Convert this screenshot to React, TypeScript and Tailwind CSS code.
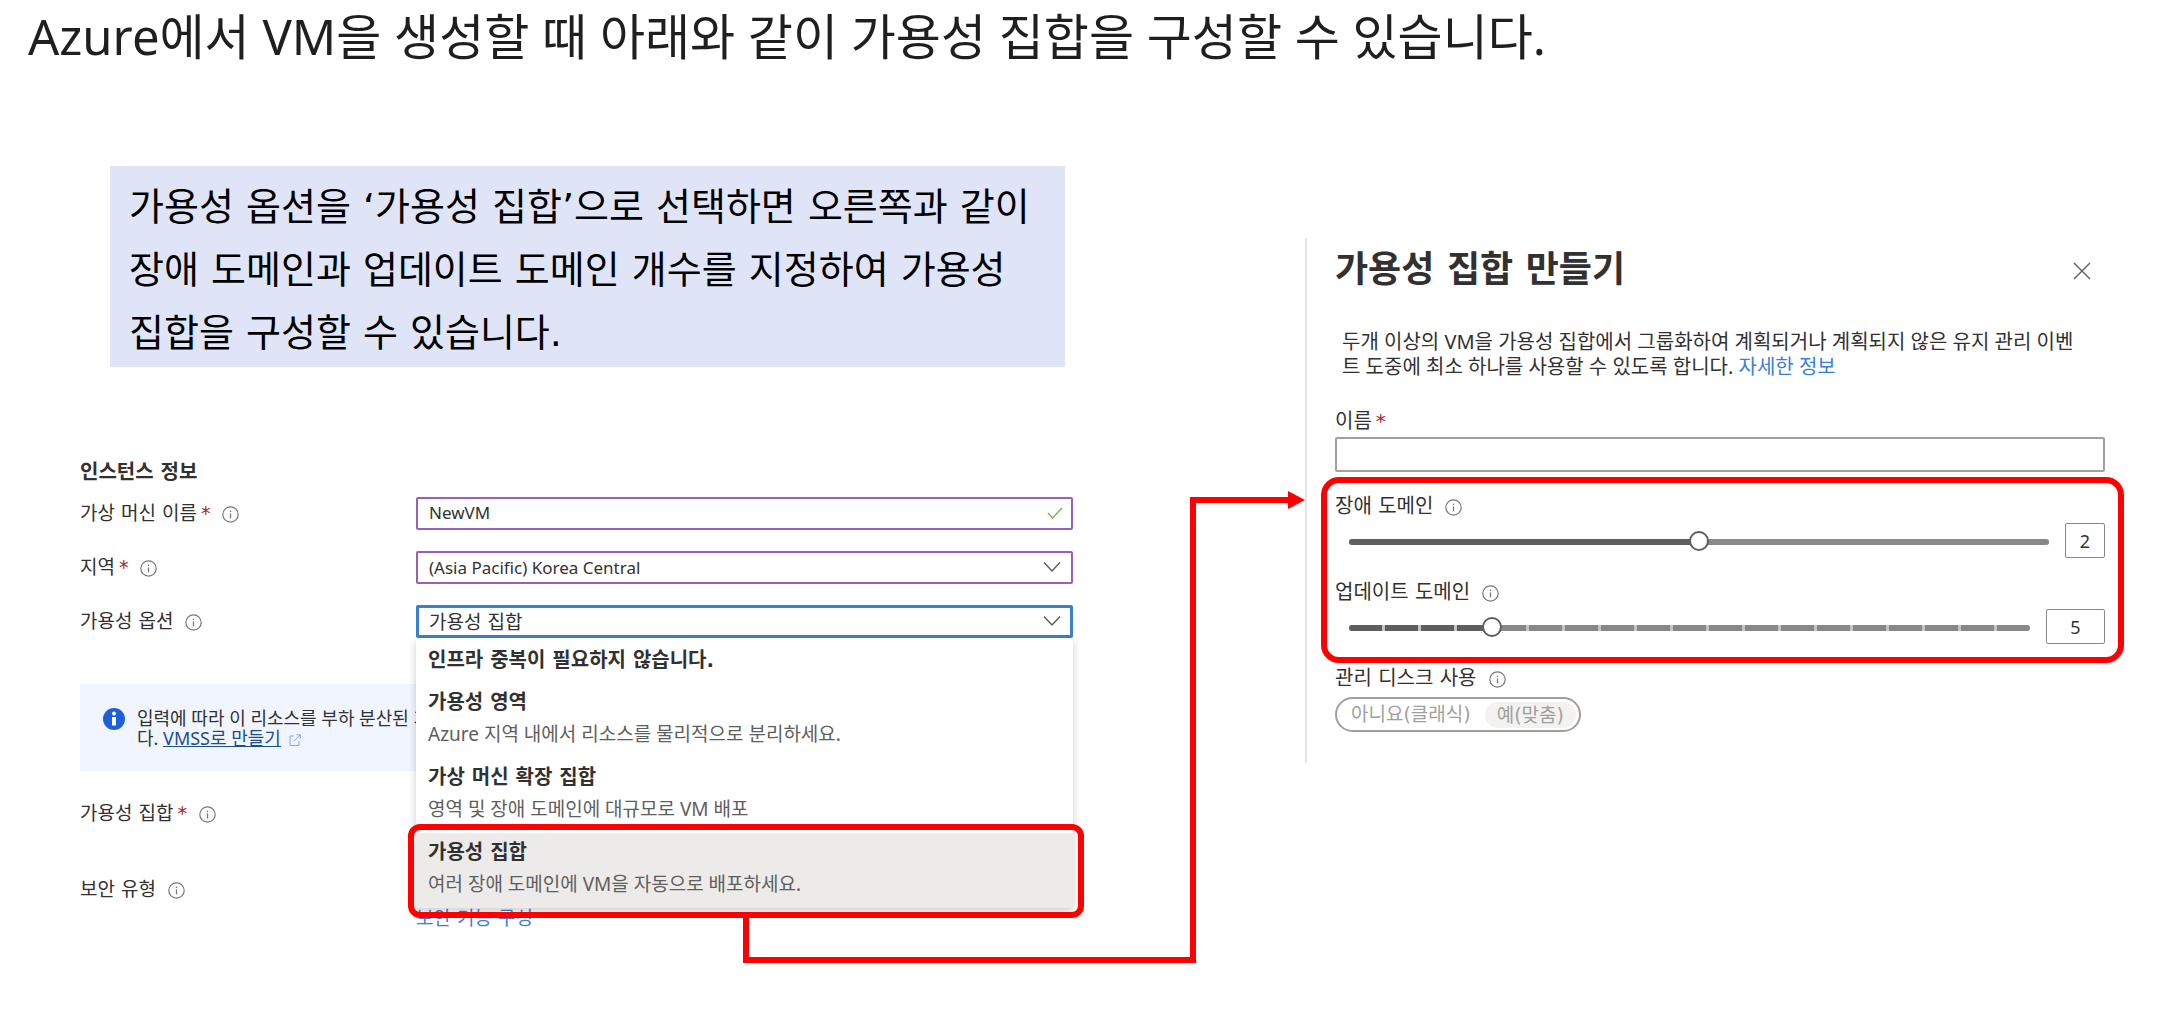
import { useState } from 'react'

interface Option {
  title: string
  description?: string
}

const OPTIONS: Option[] = [
  { title: '인프라 중복이 필요하지 않습니다.' },
  { title: '가용성 영역', description: 'Azure 지역 내에서 리소스를 물리적으로 분리하세요.' },
  { title: '가상 머신 확장 집합', description: '영역 및 장애 도메인에 대규모로 VM 배포' },
  { title: '가용성 집합', description: '여러 장애 도메인에 VM을 자동으로 배포하세요.' },
]

function InfoIcon() {
  return (
    <svg className="size-[17px] shrink-0 mt-0.5" viewBox="0 0 17 17" fill="none" stroke="#7a7876" aria-hidden="true">
      <circle cx="8.5" cy="8.5" r="7.7" strokeWidth="1.2" />
      <path d="M8.5 7.4v5" strokeWidth="1.3" />
      <path d="M8.5 4.6v1.4" strokeWidth="1.3" />
    </svg>
  )
}

function Chevron() {
  return (
    <svg className="absolute right-3 top-2.5 w-[18px] h-3 pointer-events-none" viewBox="0 0 18 12" fill="none" stroke="#605e5c" strokeWidth="1.5" aria-hidden="true">
      <path d="M1 1.5l8 8.5 8-8.5" />
    </svg>
  )
}

interface LabelProps {
  htmlFor?: string
  text: string
  required?: boolean
  info?: boolean
}

function FieldLabel({ htmlFor, text, required, info = true }: LabelProps) {
  return (
    <div className="flex items-center font-['DejaVu_Sans','Noto_Sans_CJK_KR',sans-serif]">
      <label htmlFor={htmlFor} className="whitespace-nowrap">
        {text}
        {required && <span className="text-[#a4262c] ml-1">*</span>}
      </label>
      {info && <span className="ml-3"><InfoIcon /></span>}
    </div>
  )
}

interface SliderProps {
  id: string
  label: string
  min: number
  max: number
  value: number
  onChange: (value: number) => void
  wide?: boolean
}

function DomainSlider({ id, label, min, max, value, onChange, wide }: SliderProps) {
  const steps = Array.from({ length: max - min }, (_, i) => i + min)

  return (
    <div>
      <div className="h-8 flex items-center">
        <FieldLabel htmlFor={id} text={label} />
      </div>
      <div className="flex items-center gap-4 pl-3.5 h-[35px] mt-px">
        <div className="grid flex-1 items-center">
          <div className="[grid-area:1/1] mt-[3px] flex gap-[3px] h-1.5 rounded-full overflow-hidden bg-[#c8c6c4]">
            {steps.map((step) => (
              <div key={step} className={`flex-1 ${step < value ? 'bg-[#605e5c]' : 'bg-[#8a8886]'}`} />
            ))}
          </div>
          <input
            id={id}
            type="range"
            min={min}
            max={max}
            value={value}
            onChange={(e) => onChange(Number(e.target.value))}
            className="[grid-area:1/1] -mx-2.5 w-[calc(100%+20px)] h-5 appearance-none bg-transparent [&::-webkit-slider-thumb]:appearance-none [&::-webkit-slider-thumb]:size-5 [&::-webkit-slider-thumb]:rounded-full [&::-webkit-slider-thumb]:border-2 [&::-webkit-slider-thumb]:border-[#605e5c] [&::-webkit-slider-thumb]:bg-white"
          />
        </div>
        <input
          aria-label={`${label} 값`}
          value={value}
          readOnly
          className={`h-[35px] border border-[#8a8886] rounded-xs text-center text-[18px] ${wide ? 'w-[59px]' : 'w-10'}`}
        />
      </div>
    </div>
  )
}

// Red line from the selected option over to the create panel
function Connector() {
  return (
    <div className="pointer-events-none" aria-hidden="true">
      <div className="absolute left-1/2 -right-28 top-full h-[45px] -ml-[3px] border-l-6 border-b-6 border-[#ff0000]" />
      <div className="absolute left-full ml-[106px] -bottom-[45px] w-[98px] h-[466px] border-l-6 border-t-6 border-[#ff0000]">
        <svg className="absolute -right-[17px] -top-3 w-[17px] h-[18px]" viewBox="0 0 17 18">
          <path d="M0 0l17 9-17 9z" fill="#ff0000" />
        </svg>
      </div>
    </div>
  )
}

function InstanceForm() {
  const [name, setName] = useState('NewVM')
  const [selected, setSelected] = useState('가용성 집합')

  return (
    <form className="mt-[91px] text-[19px] text-[#323130]">
      <h2 className="text-[20px] leading-7 font-bold font-['DejaVu_Sans','Noto_Sans_CJK_KR',sans-serif]">인스턴스 정보</h2>

      <div className="mt-[11px] grid grid-cols-[336px_1fr] auto-rows-[33px] gap-y-[21px]">
        <FieldLabel htmlFor="vm-name" text="가상 머신 이름" required />
        <div className="relative">
          <input
            id="vm-name"
            value={name}
            onChange={(e) => setName(e.target.value)}
            className="w-full h-full pl-[11px] pr-10 pb-0.5 text-[17px] border-2 border-[#9b5fb5] rounded-xs"
          />
          <svg className="absolute right-2.5 top-2.5 w-4 h-3" viewBox="0 0 16 12" fill="none" stroke="#7fb95a" strokeWidth="1.6" aria-hidden="true">
            <path d="M1 6l4.5 5L15 1" />
          </svg>
        </div>

        <FieldLabel htmlFor="region" text="지역" required />
        <div className="relative">
          <select id="region" className="appearance-none w-full h-full pl-[11px] pr-10 text-[17px] border-2 border-[#9b5fb5] rounded-xs">
            <option>(Asia Pacific) Korea Central</option>
          </select>
          <Chevron />
        </div>

        <FieldLabel htmlFor="availability" text="가용성 옵션" />
        <div className="relative">
          <select
            id="availability"
            value={selected}
            onChange={(e) => setSelected(e.target.value)}
            className="appearance-none w-full h-full pl-2.5 pr-10 border-3 border-[#3a7fd5] rounded-xs font-['DejaVu_Sans','Noto_Sans_CJK_KR',sans-serif]"
          >
            {OPTIONS.map((o) => <option key={o.title}>{o.title}</option>)}
          </select>
          <Chevron />

          <ul className="absolute z-10 inset-x-0 top-full bg-white shadow-[0_3px_8px_rgba(0,0,0,0.2)]" role="listbox" aria-label="가용성 옵션">
            {OPTIONS.map((o) => (
              <li
                key={o.title}
                role="option"
                aria-selected={o.title === selected}
                onClick={() => setSelected(o.title)}
                className={`relative px-3 ${o.description ? 'h-[75px] pt-[5px]' : 'h-[45px] pt-2'} ${o.title === selected ? 'bg-[#edebe9]' : ''}`}
              >
                <div className="text-[20px] leading-7 font-bold font-['DejaVu_Sans','Noto_Sans_CJK_KR',sans-serif]">{o.title}</div>
                {o.description && <div className="mt-1 leading-7 text-[#605e5c]">{o.description}</div>}
                {o.title === selected && (
                  <div className="absolute -left-2 -right-[11px] -top-[9px] -bottom-2.5">
                    <div className="h-full border-6 border-[#ff0000] rounded-xl" />
                    <Connector />
                  </div>
                )}
              </li>
            ))}
          </ul>
        </div>
      </div>

      <div className="mt-[46px] mr-3 h-[87px] pt-6 pl-[23px] flex gap-3 bg-[#f0f5ff] text-[18px] leading-5">
        <svg className="size-[22px] shrink-0" viewBox="0 0 22 22" aria-hidden="true">
          <circle cx="11" cy="11" r="11" fill="#1f5fd8" />
          <circle cx="11" cy="5.5" r="2" fill="#fff" />
          <path d="M9 9h4v8.500h-4z" fill="#fff" />
        </svg>
        <p className="whitespace-nowrap">
          입력에 따라 이 리소스를 부하 분산된 가상<br />
          다. <a href="#vmss" className="text-[#1b4f8c] underline">VMSS로 만들기</a>
          <svg className="inline ml-2 size-3" viewBox="0 0 12 12" fill="none" stroke="#7ea6ea" aria-hidden="true">
            <path d="M5 2H1v9.5h9V7M7.5.8H11.400V4.500M11.200 1L5 7" />
          </svg>
        </p>
      </div>

      <div className="mt-[26px] grid grid-cols-[336px_1fr] auto-rows-[33px] gap-y-[43px]">
        <div className="col-span-2 flex"><FieldLabel text="가용성 집합" required /></div>
        <div className="col-span-2 flex"><FieldLabel text="보안 유형" /></div>
      </div>
      <a href="#security" className="ml-[336px] block w-fit leading-6 text-[#3a7fd5] font-['DejaVu_Sans','Noto_Sans_CJK_KR',sans-serif]">보안 기능 구성</a>
    </form>
  )
}

function CreatePanel() {
  const [fault, setFault] = useState(2)
  const [update, setUpdate] = useState(5)

  return (
    <section className="mt-[72px] h-[525px] pl-7 border-l-2 border-[#e5e5e5] text-[20px] text-[#323130]">
      <div className="flex items-center justify-between pt-2 pr-3.5">
        <h2 className="text-[36px] leading-12 font-bold font-['DejaVu_Sans','Noto_Sans_CJK_KR',sans-serif]">가용성 집합 만들기</h2>
        <button type="button" aria-label="닫기">
          <svg className="size-[18px] mt-0.5" viewBox="0 0 18 18" fill="none" stroke="#605e5c" strokeWidth="1.4">
            <path d="M1 1l16 16M17 1L1 17" />
          </svg>
        </button>
      </div>

      <p className="mt-[35px] pl-[7px] leading-[25px] whitespace-nowrap">
        두개 이상의 VM을 가용성 집합에서 그룹화하여 계획되거나 계획되지 않은 유지 관리 이벤<br />
        트 도중에 최소 하나를 사용할 수 있도록 합니다. <a href="#more" className="text-[#3a7fd5]">자세한 정보</a>
      </p>

      <div className="mt-[26px] leading-8">
        <FieldLabel htmlFor="set-name" text="이름" required info={false} />
      </div>
      <input id="set-name" className="block w-full h-[35px] px-3 border-2 border-[#a3a1a0] rounded-xs" />

      <div className="mt-[5px] -ml-[14px] -mr-[19px] h-[186px] border-6 border-[#ff0000] rounded-[18px] pl-2 pr-[13px] pt-[7px] flex flex-col gap-[18px]">
        <DomainSlider id="fault-domain" label="장애 도메인" min={1} max={3} value={fault} onChange={setFault} />
        <DomainSlider id="update-domain" label="업데이트 도메인" min={1} max={20} value={update} onChange={setUpdate} wide />
      </div>

      <div className="h-8">
        <FieldLabel text="관리 디스크 사용" />
      </div>
      <div className="w-fit h-[35px] mt-0.5 pl-3.5 pr-[3px] flex items-center gap-3.5 border-2 border-[#a19f9d] rounded-full text-[19px] text-[#a19f9d] font-['DejaVu_Sans','Noto_Sans_CJK_KR',sans-serif]">
        <button type="button" disabled>아니요(클래식)</button>
        <button type="button" disabled className="h-[26px] leading-[26px] px-3 rounded-full bg-[#f3f2f1]">예(맞춤)</button>
      </div>
    </section>
  )
}

export default function App() {
  return (
    <main className="bg-white font-['Noto_Sans','Noto_Sans_CJK_KR',sans-serif] overflow-x-hidden pb-16">
      <h1 className="pl-7 text-[49px] leading-[72px] text-[#1f1f1f]">
        Azure에서 VM을 생성할 때 아래와 같이 가용성 집합을 구성할 수 있습니다.
      </h1>

      <div className="mt-[94px] pl-20 pr-[69px] grid grid-cols-[993fr_800fr] gap-[232px]">
        <div>
          <p className="ml-[30px] mr-2 pl-[19px] pt-2.5 pb-0.5 bg-[#dfe5f7] text-[38px] leading-[63px] text-black font-['DejaVu_Sans','Noto_Sans_CJK_KR',sans-serif]">
            가용성 옵션을 ‘가용성 집합’으로 선택하면 오른쪽과 같이<br />
            장애 도메인과 업데이트 도메인 개수를 지정하여 가용성<br />
            집합을 구성할 수 있습니다.
          </p>
          <InstanceForm />
        </div>
        <CreatePanel />
      </div>
    </main>
  )
}
